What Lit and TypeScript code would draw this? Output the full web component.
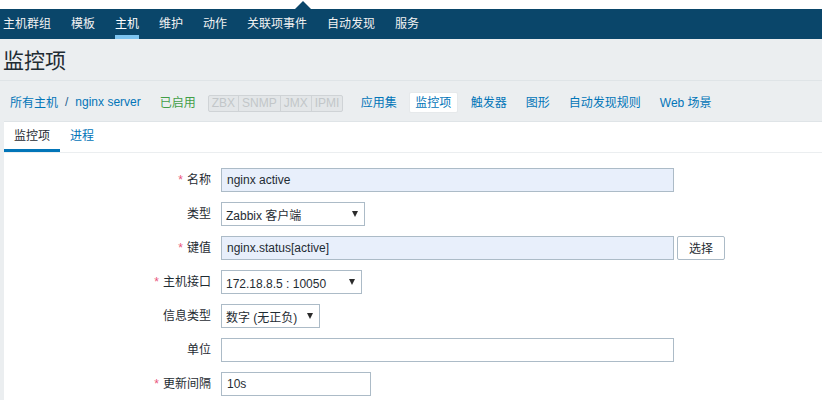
import { LitElement, html, css } from "lit";
import { customElement } from "lit/decorators.js";

interface Row {
  label: string;
  req?: boolean;
  kind: "input" | "select";
  value: string;
  width: number;
  hl?: boolean;
  button?: string;
}

const ROWS: Row[] = [
  { label: "名称", req: true, kind: "input", value: "nginx active", width: 453, hl: true },
  { label: "类型", kind: "select", value: "Zabbix 客户端", width: 144 },
  { label: "键值", req: true, kind: "input", value: "nginx.status[active]", width: 453, hl: true, button: "选择" },
  { label: "主机接口", req: true, kind: "select", value: "172.18.8.5 : 10050", width: 141 },
  { label: "信息类型", kind: "select", value: "数字 (无正负)", width: 99 },
  { label: "单位", kind: "input", value: "", width: 453 },
  { label: "更新间隔", req: true, kind: "input", value: "10s", width: 150 },
];

@customElement("app-root")
export class AppRoot extends LitElement {
  static styles = css`
    :host {
      display: block;
      width: 822px;
      height: 400px;
      overflow: hidden;
      background: #ebeef0;
      font-family: "Liberation Sans", "Noto Sans CJK SC", sans-serif;
      font-size: 12px;
      color: #1f2c33;
    }
    .top { height: 9px; background: #fff; position: relative; }
    .arrow {
      position: absolute; left: 295px; top: 1px; width: 0; height: 0;
      border-left: 8px solid transparent; border-right: 8px solid transparent;
      border-bottom: 8px solid #0a466a;
    }
    .nav {
      height: 30px; background: #0a466a; display: flex; gap: 20px;
      padding-left: 3px; box-sizing: border-box;
    }
    .nav a {
      color: #f2f2f2; line-height: 31px; height: 30px; box-sizing: border-box; display: block;
    }
    .nav a.active { color: #fff; border-bottom: 4px solid #7dc4f0; }
    .title {
      height: 42px; box-sizing: border-box; border-bottom: 1px solid #dfe4e7;
      font-size: 21px; line-height: 43px; padding-left: 3px; color: #1f2c33; font-weight: normal;
    }
    .sub {
      height: 40px; display: flex; align-items: center; padding-left: 10px;
      color: #0275b8; box-sizing: border-box; padding-top: 1px; white-space: nowrap;
    }
    .sep { margin: 0 7px; color: #1f5f8f; }
    .green { color: #429e47; margin-left: 19px; }
    .chips {
      display: flex; margin-left: 12px; margin-top: 3px; height: 17px; box-sizing: border-box;
      border: 1px solid #cfd3d6; border-radius: 2px; background: #e3e6e8;
      color: #c2c6c9; font-size: 12px; font-weight: normal; width: 135px;
    }
    .chips span { padding: 0 3px; line-height: 15px; border-right: 1px solid #cfd3d6; text-align: center; box-sizing: border-box; }
    .chips span:last-child { border-right: 0; }
    .lnk { margin-left: 19px; }
    .lnk.first { margin-left: 18px; }
    .lnk.on {
      background: #fff; margin-left: 12px; margin-top: 2px; line-height: 20px; height: 21px; width: 49px;
      box-sizing: border-box; border: 1px solid #e6e9eb; border-radius: 2px; text-align: center;
    }
    .lnk.after { margin-left: 13px; }
    .panel { margin-left: 4px; background: #fff; height: 279px; border-top: 1px solid #dfe4e7; }
    .tabs { display: flex; height: 31px; border-bottom: 1px solid #ebeef0; box-sizing: border-box; }
    .tabs a { padding: 0 10px; line-height: 29px; height: 30px; box-sizing: border-box; color: #0275b8; }
    .tabs a.active { color: #1f2c33; border-bottom: 3px solid #0275b8; }
    .form {
      padding-top: 15px; display: grid; grid-template-columns: 207px auto; column-gap: 10px; row-gap: 10px;
      justify-content: start;
    }
    .lab { text-align: right; line-height: 25px; height: 24px; color: #1f2c33; }
    .req { color: #e9557c; margin-right: 4px; }
    .ctl { display: flex; gap: 3px; height: 24px; }
    .field {
      height: 24px; box-sizing: border-box; border: 1px solid #acbbc7; background: #fff;
      color: #1f2c33; line-height: 22px; padding-left: 5px; position: relative; white-space: nowrap;
    }
    .field.hl { background: #e8effb; }
    .field.sel { padding-left: 4px; line-height: 26px; }
    .caret {
      position: absolute; right: 6px; top: 8px; width: 0; height: 0;
      border-left: 3px solid transparent; border-right: 3px solid transparent;
      border-top: 6px solid #2b2b2b;
    }
    .btn {
      width: 48px; height: 24px; box-sizing: border-box; border: 1px solid #acbbc7; border-radius: 2px;
      background: #fff; text-align: center; line-height: 24px; color: #1f2c33;
    }
  `;

  render() {
    const nav = ["主机群组", "模板", "主机", "维护", "动作", "关联项事件", "自动发现", "服务"];
    return html`
      <div class="top"><div class="arrow"></div></div>
      <div class="nav">
        ${nav.map((n) => html`<a class=${n === "主机" ? "active" : ""}>${n}</a>`)}
      </div>
      <div class="title">监控项</div>
      <div class="sub">
        <span>所有主机</span><span class="sep">/</span><span>nginx server</span>
        <span class="green">已启用</span>
        <div class="chips"><span>ZBX</span><span>SNMP</span><span>JMX</span><span>IPMI</span></div>
        <span class="lnk first">应用集</span>
        <span class="lnk on">监控项</span>
        <span class="lnk after">触发器</span>
        <span class="lnk">图形</span>
        <span class="lnk">自动发现规则</span>
        <span class="lnk">Web 场景</span>
      </div>
      <div class="panel">
        <div class="tabs"><a class="active">监控项</a><a>进程</a></div>
        <div class="form">
          ${ROWS.map(
            (r) => html`
              <div class="lab">${r.req ? html`<span class="req">*</span>` : ""}${r.label}</div>
              <div class="ctl">
                <div
                  class="field ${r.hl ? "hl" : ""} ${r.kind === "select" ? "sel" : ""}"
                  style="width:${r.width}px"
                >
                  ${r.value}${r.kind === "select" ? html`<span class="caret"></span>` : ""}
                </div>
                ${r.button ? html`<div class="btn">${r.button}</div>` : ""}
              </div>
            `
          )}
        </div>
      </div>
    `;
  }
}
